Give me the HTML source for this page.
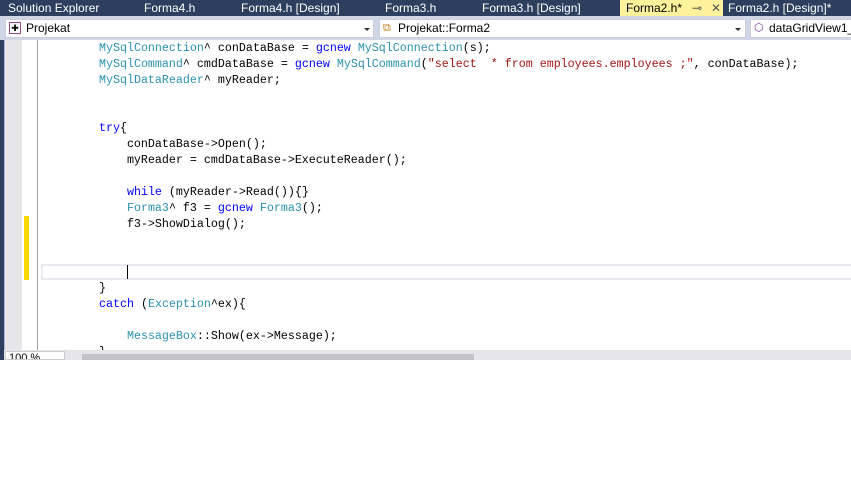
<!DOCTYPE html>
<html><head><meta charset="utf-8"><style>
*{margin:0;padding:0;box-sizing:border-box}
body{width:851px;height:480px;background:#fff;position:relative;overflow:hidden;font-family:"Liberation Sans",sans-serif}
.abs{position:absolute}
#tabs{left:0;top:0;width:851px;height:16px;background:#2d3e5e;color:#fff;font-size:12px}
#tabs span{position:absolute;top:0;line-height:16px;white-space:nowrap}
#bar{left:0;top:16px;width:851px;height:24px;background:#cfd6e5}
.dd{position:absolute;top:3px;height:19px;background:#fff;border:1px solid #ccd;font-size:12px;line-height:17px;color:#000;white-space:nowrap;overflow:hidden}
.arr{position:absolute;top:8px;width:0;height:0;border-left:3px solid transparent;border-right:3px solid transparent;border-top:3px solid #333}
#code{left:0;top:40px;width:851px;height:310px;background:#fff;overflow:hidden}
pre{position:absolute;left:43px;top:0;font-family:"Liberation Mono",monospace;font-size:11.67px;line-height:16px;color:#000}
.t{color:#2b91af}.k{color:#0000ff}.s{color:#a31515}
</style></head><body>
<div id="tabs" class="abs">
<span style="left:8px">Solution Explorer</span>
<span style="left:144px">Forma4.h</span>
<span style="left:241px">Forma4.h [Design]</span>
<span style="left:385px">Forma3.h</span>
<span style="left:482px">Forma3.h [Design]</span>
<span style="left:620px;width:103px;height:16px;background:#fff29d;color:#000;padding-left:6px">Forma2.h*<span style="left:72px;color:#555">⊸</span><span style="left:91px;color:#555">✕</span></span>
<span style="left:728px">Forma2.h [Design]*</span>
</div>
<div id="bar" class="abs">
<div class="dd" style="left:5px;width:369px;padding-left:20px"><span style="position:absolute;left:3px;top:2px;width:12px;height:12px;border:1px solid #8c4a8c;font-size:9px;line-height:10px;text-align:center">✚</span>Projekat<div class="arr" style="left:358px"></div></div>
<div class="dd" style="left:379px;width:367px;padding-left:18px"><span style="position:absolute;left:3px;top:0;color:#c8801a;font-size:11px">⧉</span>Projekat::Forma2<div class="arr" style="left:355px"></div></div>
<div class="dd" style="left:750px;width:110px;padding-left:18px"><span style="position:absolute;left:3px;top:0;color:#7a3c9a;font-size:11px">⬡</span>dataGridView1_</div>
</div>
<div id="code" class="abs">
<div class="abs" style="left:0;top:0;width:4px;height:310px;background:#2d3e5e"></div>
<div class="abs" style="left:4px;top:0;width:1px;height:310px;background:#a8b8e0"></div>
<div class="abs" style="left:5px;top:0;width:17px;height:310px;background:#e6e6e8"></div>
<div class="abs" style="left:37px;top:0;width:1px;height:310px;background:#a0a0a0"></div>
<div class="abs" style="left:24px;top:176px;width:5px;height:64px;background:#ffd800"></div>
<div class="abs" style="left:41px;top:224px;width:820px;height:16px;border:2px solid #eaeaf2"></div>
<div class="abs" style="left:127px;top:225px;width:1px;height:14px;background:#000"></div>
<pre>        <span class="t">MySqlConnection</span>^ conDataBase = <span class="k">gcnew</span> <span class="t">MySqlConnection</span>(s);
        <span class="t">MySqlCommand</span>^ cmdDataBase = <span class="k">gcnew</span> <span class="t">MySqlCommand</span>(<span class="s">"select  * from employees.employees ;"</span>, conDataBase);
        <span class="t">MySqlDataReader</span>^ myReader;


        <span class="k">try</span>{
            conDataBase->Open();
            myReader = cmdDataBase->ExecuteReader();

            <span class="k">while</span> (myReader->Read()){}
            <span class="t">Forma3</span>^ f3 = <span class="k">gcnew</span> <span class="t">Forma3</span>();
            f3->ShowDialog();



        }
        <span class="k">catch</span> (<span class="t">Exception</span>^ex){

            <span class="t">MessageBox</span>::Show(ex->Message);
        }</pre>
</div>
<div class="abs" style="left:0;top:350px;width:4px;height:10px;background:#2d3e5e"></div>
<div class="abs" style="left:4px;top:350px;width:847px;height:10px;background:#e6e6ea"></div>
<div class="abs" style="left:5px;top:351px;width:60px;height:9px;background:#fff;border:1px solid #ccc;font-size:11px;line-height:13px;overflow:hidden;padding-left:3px">100 %</div>
<div class="abs" style="left:82px;top:354px;width:392px;height:6px;background:#c2c3c9"></div>
</body></html>
